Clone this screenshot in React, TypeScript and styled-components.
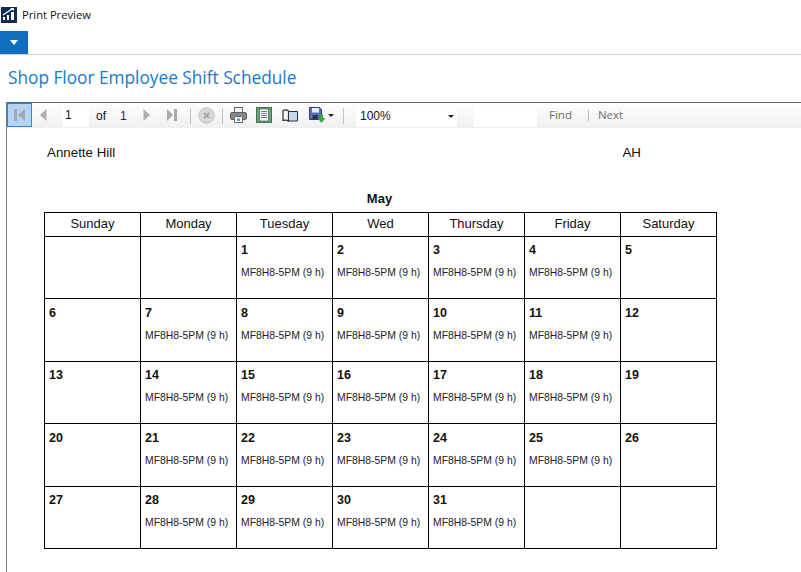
import React from 'react';
import styled, { createGlobalStyle } from 'styled-components';

const GlobalStyle = createGlobalStyle`
  html, body { margin: 0; padding: 0; background: #fff; overflow: hidden; }
  body { width: 801px; height: 572px; font-family: "Liberation Sans", Arial, sans-serif; }
`;

const SHIFT = 'MF8H8-5PM (9 h)';
const days = ['Sunday', 'Monday', 'Tuesday', 'Wed', 'Thursday', 'Friday', 'Saturday'];
const weeks: { cells: (number | null)[]; height: number; top: number }[] = [
  { cells: [null, null, 1, 2, 3, 4, 5], height: 62, top: 6 },
  { cells: [6, 7, 8, 9, 10, 11, 12], height: 63, top: 7 },
  { cells: [13, 14, 15, 16, 17, 18, 19], height: 62, top: 6 },
  { cells: [20, 21, 22, 23, 24, 25, 26], height: 63, top: 7 },
  { cells: [27, 28, 29, 30, 31, null, null], height: 62, top: 6 },
];

const AppIcon = () => (
  <svg width="16" height="16" viewBox="0 0 16 16">
    <rect width="16" height="16" fill="#0f2b52" />
    <path d="M2 13h2V10H2zM6 13h2V8H6zM10 13h3V5h-3z" fill="#fff" />
    <path d="M2 8 8 4l3-2" stroke="#fff" strokeWidth="1.3" fill="none" />
    <path d="M9 1h4v3z" fill="#fff" />
  </svg>
);

const FirstIcon = () => (
  <svg width="13" height="14" viewBox="0 0 13 14">
    <rect x="1" y="1" width="3" height="12" fill="#a3a9ae" />
    <path d="M12 1v12L5 7z" fill="#a3a9ae" />
  </svg>
);

const PrevIcon = () => (
  <svg width="8" height="14" viewBox="0 0 8 14">
    <path d="M7.500 1v12L1 7z" fill="#b0b0b0" />
  </svg>
);

const NextIcon = () => (
  <svg width="8" height="14" viewBox="0 0 8 14">
    <path d="M.5 1v12L7 7z" fill="#b0b0b0" />
  </svg>
);

const LastIcon = () => (
  <svg width="12" height="14" viewBox="0 0 12 14">
    <path d="M1 1v12l6-6z" fill="#a9a9a9" />
    <rect x="8" y="1" width="3" height="12" fill="#a9a9a9" />
  </svg>
);

const StopIcon = () => (
  <svg width="17" height="17" viewBox="0 0 17 17">
    <circle cx="8.500" cy="8.500" r="7.700" fill="#d9d9d9" stroke="#c2c2c2" />
    <path d="M6 6l5 5M11 6l-5 5" stroke="#a6a6a6" strokeWidth="2" />
  </svg>
);

const PrintIcon = () => (
  <svg width="17" height="16" viewBox="0 0 17 16">
    <rect x="4.500" y=".5" width="8" height="5.500" fill="#eef0f2" stroke="#62666c" />
    <rect x=".5" y="5.500" width="16" height="7" rx="1.500" fill="#858a91" stroke="#5c6066" />
    <rect x="4.500" y="9.500" width="8" height="6" fill="#fff" stroke="#6c7076" />
    <rect x="7" y="11.500" width="3" height="2.500" fill="#5a9bd5" />
  </svg>
);

const PageIcon = () => (
  <svg width="16" height="16" viewBox="0 0 16 16">
    <rect x=".5" y=".5" width="15" height="15" fill="#6f9f72" stroke="#3f7a45" />
    <rect x="3.500" y="2" width="9" height="12" fill="#f6f8fb" stroke="#4d5e75" strokeWidth=".7" />
    <path d="M5 4.500h6M5 6.500h6M5 8.500h6M5 10.500h6" stroke="#4d5e75" strokeWidth=".8" />
  </svg>
);

const BookIcon = () => (
  <svg width="16" height="13" viewBox="0 0 16 13">
    <path d="M1 1.500c2-1 4-1 5.500.5v10c-1.500-1-3.500-1-5.500-.5z" fill="#f4f6f8" stroke="#2c3036" strokeWidth="1.200" />
    <path d="M6.500 2.500h9v9.500h-9z" fill="#c4d8ef" stroke="#2c3036" />
  </svg>
);

const SaveIcon = () => (
  <svg width="17" height="17" viewBox="0 0 17 17">
    <path d="M.5 .5h10l2 2v10H.5z" fill="#5a6cc0" stroke="#303f88" />
    <rect x="3" y="1" width="7" height="4.500" fill="#e9edf7" />
    <rect x="3.500" y="8" width="5.500" height="4.500" fill="#2c3450" />
    <path d="M11 7.500V11H8.500l4 5 4-5H14V7.500z" fill="#35a843" />
  </svg>
);

const Caret = styled.span`
  display: block;
  flex: none;
  width: 0;
  height: 0;
  border-left: 3px solid transparent;
  border-right: 3px solid transparent;
  border-top: 3px solid #222;
`;

export default function App() {
  return (
    <Page>
      <GlobalStyle />
      <TitleBar>
        <AppIcon />
        <WindowTitle>Print Preview</WindowTitle>
      </TitleBar>
      <Ribbon>
        <MenuButton><MenuArrow /></MenuButton>
      </Ribbon>
      <Heading>Shop Floor Employee Shift Schedule</Heading>
      <Viewer>
        <Toolbar>
          <ActiveButton><FirstIcon /></ActiveButton>
          <IconSlot $width={22}><PrevIcon /></IconSlot>
          <PageInput>1</PageInput>
          <OfLabel>of</OfLabel>
          <PageTotal>1</PageTotal>
          <IconSlot $width={27}><NextIcon /></IconSlot>
          <IconSlot $width={24}><LastIcon /></IconSlot>
          <Divider $left={6} />
          <IconSlot $width={31}><StopIcon /></IconSlot>
          <Divider />
          <IconSlot $width={30}><PrintIcon /></IconSlot>
          <IconSlot $width={22}><PageIcon /></IconSlot>
          <IconSlot $width={30}><BookIcon /></IconSlot>
          <SaveSlot><SaveIcon /><Caret /></SaveSlot>
          <Divider />
          <ZoomBox>
            <span>100%</span>
            <Caret />
          </ZoomBox>
          <FindInput />
          <ToolLink>Find</ToolLink>
          <ThinDivider />
          <ToolLink>Next</ToolLink>
        </Toolbar>
        <Report>
          <NameRow>
            <span>Annette Hill</span>
            <span>AH</span>
          </NameRow>
          <Month>May</Month>
          <Calendar>
            <thead>
              <tr>
                {days.map((d) => (
                  <DayHead key={d}>{d}</DayHead>
                ))}
              </tr>
            </thead>
            <tbody>
              {weeks.map((w) => (
                <WeekRow key={w.cells.join('-')} $height={w.height}>
                  {w.cells.map((n, i) => (
                    <DayCell key={i} $top={w.top}>
                      {n !== null && (
                        <>
                          <DayNumber>{n}</DayNumber>
                          {i > 0 && i < 6 && <Shift>{SHIFT}</Shift>}
                        </>
                      )}
                    </DayCell>
                  ))}
                </WeekRow>
              ))}
            </tbody>
          </Calendar>
        </Report>
      </Viewer>
    </Page>
  );
}

const Page = styled.div`
  width: 801px;
  height: 572px;
  overflow: hidden;
  background: #fff;
  display: flex;
  flex-direction: column;
`;

const TitleBar = styled.div`
  height: 31px;
  box-sizing: border-box;
  padding: 7px 0 0 1px;
  display: flex;
  align-items: flex-start;
  gap: 5px;
`;

const WindowTitle = styled.div`
  font-family: "Open Sans", sans-serif;
  font-size: 11.200px;
  line-height: 16px;
  color: #111;
`;

const Ribbon = styled.div`
  height: 24px;
  box-sizing: border-box;
  border-bottom: 1px solid #cfcfcf;
`;

const MenuButton = styled.div`
  width: 28px;
  height: 23px;
  background: #106ebe;
  display: flex;
  align-items: center;
  justify-content: center;
`;

const MenuArrow = styled.span`
  width: 0;
  height: 0;
  border-left: 4px solid transparent;
  border-right: 4px solid transparent;
  border-top: 5px solid #fff;
`;

const Heading = styled.h1`
  margin: 0;
  padding: 11px 0 0 8px;
  height: 47px;
  box-sizing: border-box;
  font-family: "Open Sans", sans-serif;
  font-weight: 400;
  font-size: 17.260px;
  line-height: 24px;
  color: #1a78c8;
`;

const Viewer = styled.div`
  flex: 1;
  margin-left: 6px;
  border-left: 1px solid #777;
  border-top: 1px solid #666;
  display: flex;
  flex-direction: column;
`;

const Toolbar = styled.div`
  height: 25px;
  flex: none;
  background: linear-gradient(#fdfdfd, #f0f0f0);
  display: flex;
  align-items: center;
  font-size: 12px;
  color: #111;
`;

const IconSlot = styled.div<{ $width: number }>`
  width: ${(p) => p.$width}px;
  height: 100%;
  flex: none;
  box-sizing: border-box;
  padding-bottom: 1px;
  display: flex;
  align-items: center;
  justify-content: center;
`;

const ActiveButton = styled.div`
  width: 25px;
  height: 24px;
  align-self: flex-start;
  flex: none;
  box-sizing: border-box;
  background: #b3d5f2;
  border: 1px solid #2f86cf;
  display: flex;
  align-items: center;
  justify-content: center;
`;

const PageInput = styled.div`
  width: 27px;
  height: 22px;
  align-self: flex-end;
  flex: none;
  box-sizing: border-box;
  padding: 3px 0 0 3px;
  margin: 0 7px 1px 8px;
  background: #fff;
`;

const OfLabel = styled.span`
  width: 24px;
  flex: none;
  padding-top: 1px;
`;

const PageTotal = styled.span`
  width: 13px;
  flex: none;
  padding-top: 1px;
  color: #2a1a50;
`;

const Divider = styled.div<{ $left?: number }>`
  width: 1px;
  height: 16px;
  flex: none;
  margin-left: ${(p) => p.$left ?? 0}px;
  background: #c4c4c4;
`;

const ThinDivider = styled.div`
  width: 1px;
  height: 11px;
  flex: none;
  margin: 0 9px 0 16px;
  background: #b9b9b9;
`;

const SaveSlot = styled.div`
  width: 38px;
  flex: none;
  display: flex;
  align-items: center;
  gap: 2px;
  padding-left: 4px;
  box-sizing: border-box;
`;

const ZoomBox = styled.div`
  width: 101px;
  height: 22px;
  align-self: flex-end;
  margin: 0 0 1px 12px;
  flex: none;
  box-sizing: border-box;
  padding: 0 3px 0 4px;
  background: #fff;
  display: flex;
  align-items: center;
  justify-content: space-between;
`;

const FindInput = styled.div`
  width: 63px;
  height: 22px;
  align-self: flex-end;
  margin: 0 12px 1px 17px;
  flex: none;
  background: #fff;
`;

const ToolLink = styled.span`
  font-family: "Open Sans", sans-serif;
  font-size: 11.500px;
  padding-bottom: 2px;
  color: #6d6d6d;
`;

const Report = styled.div`
  flex: 1;
  padding: 0 0 0 37px;
`;

const NameRow = styled.div`
  height: 64px;
  box-sizing: border-box;
  padding: 17px 0 0 3px;
  width: 597px;
  display: flex;
  justify-content: space-between;
  font-size: 13.330px;
  line-height: 16px;
  color: #111;
`;

const Month = styled.div`
  width: 671px;
  height: 20px;
  text-align: center;
  font-size: 13px;
  font-weight: 700;
  line-height: 14px;
  color: #111;
`;

const Calendar = styled.table`
  width: 673px;
  table-layout: fixed;
  border-collapse: collapse;
  border: 1px solid #000;
`;

const DayHead = styled.th`
  height: 24px;
  padding: 0 0 3px;
  box-sizing: border-box;
  border: 1px solid #000;
  font-size: 13px;
  font-weight: 400;
  color: #111;
  text-align: center;
`;

const WeekRow = styled.tr<{ $height: number }>`
  height: ${(p) => p.$height}px;
`;

const DayCell = styled.td<{ $top: number }>`
  padding: ${(p) => p.$top}px 0 0 4px;
  border: 1px solid #000;
  vertical-align: top;
`;

const DayNumber = styled.div`
  font-size: 12.500px;
  font-weight: 700;
  line-height: 14px;
  color: #111;
`;

const Shift = styled.div`
  margin-top: 10px;
  font-size: 10.400px;
  line-height: 12px;
  color: #222;
  white-space: nowrap;
`;
